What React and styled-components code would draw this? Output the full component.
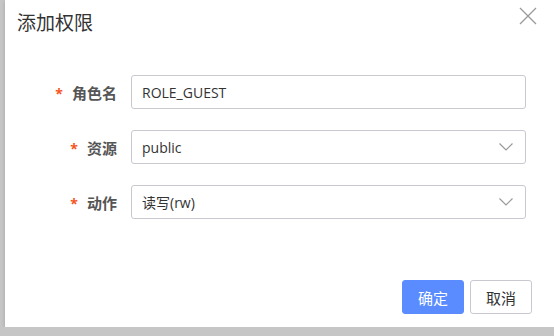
import React from 'react';
import styled, { createGlobalStyle } from 'styled-components';

const Global = createGlobalStyle`
  html, body {
    margin: 0;
    padding: 0;
    background: #c6c6c6;
    overflow: hidden;
  }
  body {
    font-family: "Open Sans", "Noto Sans CJK SC", sans-serif;
  }
`;

const Dialog = styled.div`
  margin-left: 5px;
  height: 327px;
  background: #fff;
  box-shadow: 0 1px 4px rgba(0, 0, 0, 0.18);
  display: flex;
  flex-direction: column;
  box-sizing: border-box;
`;

const Header = styled.div`
  display: flex;
  justify-content: space-between;
  align-items: flex-start;
  padding: 9px 0 0 12px;
  width: 532px;
  box-sizing: border-box;
`;

const Title = styled.h2`
  margin: 0;
  font-size: 19px;
  line-height: 26px;
  font-weight: 400;
  color: #333;
  font-family: "Noto Sans CJK SC", sans-serif;
`;

const Close = styled.button`
  border: 0;
  background: none;
  padding: 0;
  margin-top: -2px;
  width: 18px;
  height: 18px;
  color: #9a9a9a;
  cursor: pointer;
`;

const Form = styled.div`
  display: flex;
  flex-direction: column;
  gap: 21px;
  padding: 40px 0 0 17px;
`;

const Row = styled.div`
  display: grid;
  grid-template-columns: 95px 395px;
  column-gap: 14px;
  align-items: center;
`;

const Label = styled.label`
  text-align: right;
  font-size: 15px;
  font-weight: 700;
  color: #555;
  font-family: "Noto Sans CJK SC", sans-serif;

  span {
    color: #f5541f;
    margin-right: 9px;
    font-size: 14px;
    font-family: "Open Sans", sans-serif;
  }
`;

const Field = styled.div`
  height: 34px;
  box-sizing: border-box;
  border: 1px solid #c8c8d0;
  border-radius: 3px;
  display: flex;
  align-items: center;
  justify-content: space-between;
  padding: 0 11px 0 10px;
  font-size: 14px;
  color: #333;
  font-family: "Open Sans", "Noto Sans CJK SC", sans-serif;
`;

const Footer = styled.div`
  margin-top: auto;
  display: flex;
  gap: 6px;
  padding: 0 0 13px 397px;
`;

const Button = styled.button`
  height: 34px;
  width: ${p => p.w}px;
  border-radius: 3px;
  font-size: 15px;
  font-family: "Noto Sans CJK SC", sans-serif;
  border: 1px solid ${p => (p.primary ? '#5a8cff' : '#c8c8d0')};
  background: ${p => (p.primary ? '#5a8cff' : '#fff')};
  color: ${p => (p.primary ? '#fff' : '#333')};
  padding: 0;
  cursor: pointer;
`;

const Chevron = () => (
  <svg width="16" height="16" viewBox="0 0 16 16" fill="none" stroke="#9a9a9a" strokeWidth="1.2">
    <path d="M1.5 4.5 L8 11 L14.5 4.5" />
  </svg>
);

const rows = [
  { label: '角色名', value: 'ROLE_GUEST' },
  { label: '资源', value: 'public', select: true },
  { label: '动作', value: '读写(rw)', select: true }
];

export default function App() {
  return (
    <>
      <Global />
      <Dialog>
        <Header>
          <Title>添加权限</Title>
          <Close aria-label="close">
            <svg width="18" height="18" viewBox="0 0 18 18" stroke="currentColor" strokeWidth="1.3">
              <path d="M1 1 L17 17 M17 1 L1 17" />
            </svg>
          </Close>
        </Header>
        <Form>
          {rows.map(r => (
            <Row key={r.label}>
              <Label><span>*</span>{r.label}</Label>
              <Field>
                {r.value}
                {r.select && <Chevron />}
              </Field>
            </Row>
          ))}
        </Form>
        <Footer>
          <Button primary w={62}>确定</Button>
          <Button w={62}>取消</Button>
        </Footer>
      </Dialog>
    </>
  );
}
